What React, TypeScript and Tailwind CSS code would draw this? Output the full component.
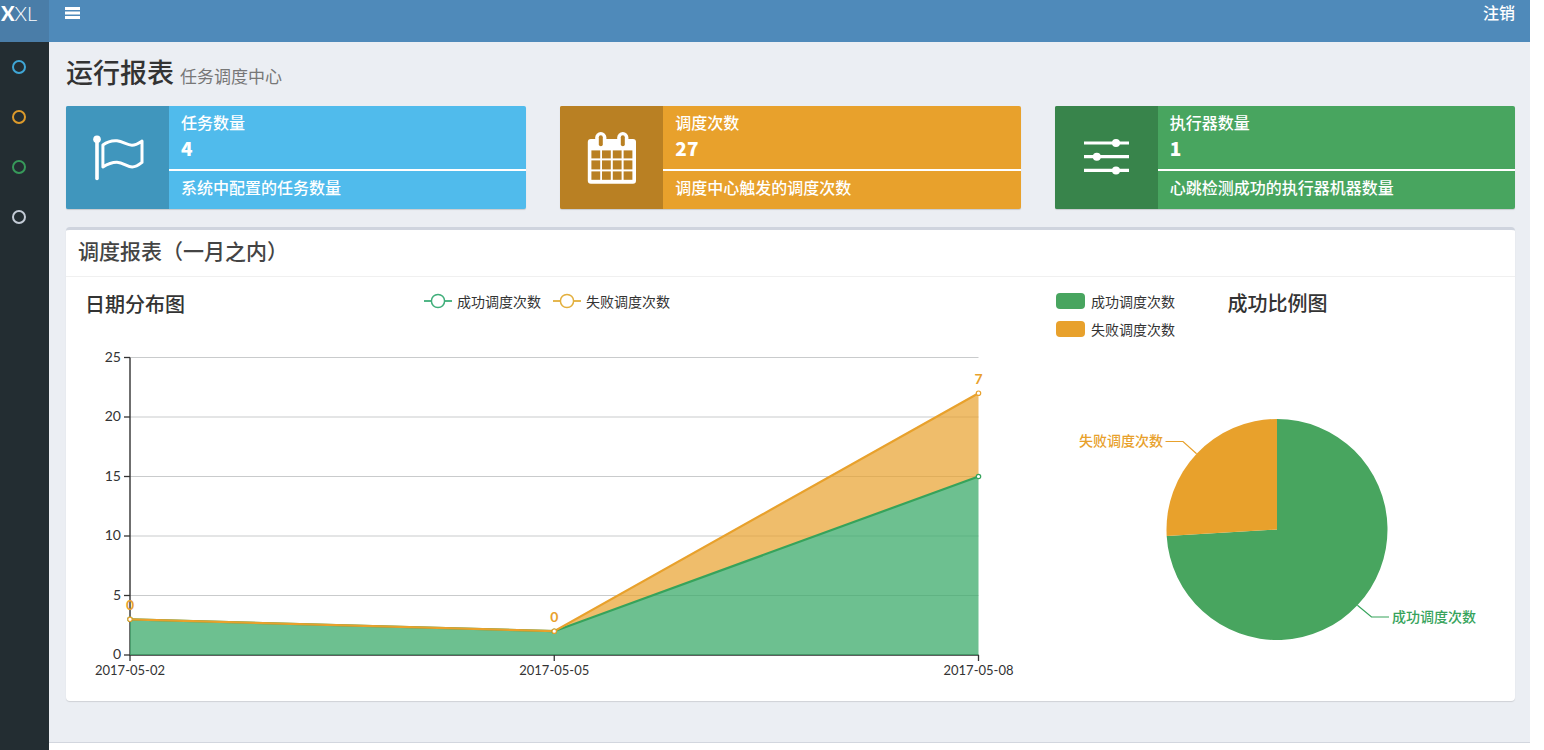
import type { ReactNode } from "react";

const SUCCESS = "#48a55f";
const FAIL = "#e8a12c";
const AXIS = "#333333";

const days = [
  { date: "2017-05-02", success: 3, fail: 0 },
  { date: "2017-05-05", success: 2, fail: 0 },
  { date: "2017-05-08", success: 15, fail: 7 },
];

const navItems = [
  { label: "运行报表", ring: "border-[#3fa6d6]" },
  { label: "任务管理", ring: "border-[#dc9a2b]" },
  { label: "调度日志", ring: "border-[#37995a]" },
  { label: "执行器管理", ring: "border-[#c3cbd6]" },
];

function FlagIcon() {
  return (
    <svg viewBox="0 0 103 103" className="h-full w-full" aria-hidden="true">
      <circle cx="31" cy="33.2" r="3.8" fill="#fff" />
      <path d="M31 34V72.5" stroke="#fff" strokeWidth="3.6" strokeLinecap="round" />
      <path
        d="M36.9 39C42 35.2 46.500 34.4 51 34.8C57 35.4 61 39.2 66 39.2C70 39.2 73 37 76 35V56.4C73 58.8 70 61 66.2 61C61.5 61 57 56.4 51 56.2C46 56.100 41.500 58 36.900 61Z"
        fill="none"
        stroke="#fff"
        strokeWidth="3"
        strokeLinejoin="round"
      />
    </svg>
  );
}

function CalendarIcon() {
  const columns = [31.4, 42, 52.8, 63.6];
  const rows = [
    { y: 44.4, height: 8 },
    { y: 54.4, height: 9 },
    { y: 65.4, height: 8.4 },
  ];
  return (
    <svg viewBox="0 0 103 103" className="h-full w-full" aria-hidden="true">
      <rect x="27.8" y="33" width="48.2" height="44.8" rx="3" fill="#fff" />
      {[40.8, 62.8].map((x) => (
        <g key={x}>
          <rect x={x - 5.6} y="26" width="11.2" height="20" rx="5.6" fill="#fff" />
          <rect x={x - 2} y="29.2" width="4" height="11" rx="2" fill="#b98023" />
        </g>
      ))}
      {rows.map(({ y, height }) =>
        columns.map((x) => <rect key={`${x}-${y}`} x={x} y={y} width="8.8" height={height} fill="#b98023" />),
      )}
    </svg>
  );
}

function SlidersIcon() {
  const sliders = [
    { y: 37, knob: 61 },
    { y: 50.7, knob: 41.8 },
    { y: 64.4, knob: 61 },
  ];
  return (
    <svg viewBox="0 0 103 103" className="h-full w-full" aria-hidden="true">
      {sliders.map(({ y, knob }) => (
        <g key={y}>
          <path d={`M29 ${y}H74`} stroke="#fff" strokeWidth="3.2" />
          <circle cx={knob} cy={y} r="4" fill="#fff" />
        </g>
      ))}
    </svg>
  );
}

type InfoBoxProps = {
  icon: ReactNode;
  label: string;
  value: number;
  note: string;
  body: string;
  side: string;
};

function InfoBox({ icon, label, value, note, body, side }: InfoBoxProps) {
  return (
    <section className={`flex overflow-hidden rounded-xs text-white shadow-[0_1px_1px_rgba(0,0,0,0.15)] ${body}`}>
      <div className={`size-[103px] shrink-0 ${side}`}>{icon}</div>
      <div className="min-w-0 flex-1">
        <div className="border-b-2 border-white px-3 pt-1 pb-[7px]">
          <h2 className="text-base leading-6 font-medium">{label}</h2>
          <p className="text-[19px] leading-7 font-black">{value}</p>
        </div>
        <p className="px-3 pt-1 text-base leading-6 font-medium">{note}</p>
      </div>
    </section>
  );
}

function LineLegend({ label, color }: { label: string; color: string }) {
  return (
    <li className="flex items-center gap-[5px]">
      <svg viewBox="0 0 28 16" className="h-4 w-7" aria-hidden="true">
        <path d="M0 8H28" stroke={color} strokeWidth="1.8" />
        <circle cx="14" cy="8" r="6.6" fill="#fff" stroke={color} strokeWidth="1.5" />
      </svg>
      {label}
    </li>
  );
}

function DateChart() {
  const left = 64;
  const right = 912.5;
  const bottom = 310;
  const y = (v: number) => bottom - v * 11.9;
  const x = (i: number) => left + (i * (right - left)) / (days.length - 1);
  const lower = days.map((d, i) => `${x(i)},${y(d.success)}`);
  const upper = days.map((d, i) => `${x(i)},${y(d.success + d.fail)}`);
  const ticks = [0, 5, 10, 15, 20, 25];
  return (
    <svg
      viewBox="0 0 966 355"
      className="block w-full font-['Lato','Noto_Sans_CJK_SC',sans-serif] text-[14px]"
      role="img"
      aria-label="日期分布图"
    >
      {ticks.map((t) => (
        <g key={t}>
          <path d={`M${left} ${y(t)}H${right}`} stroke="#c9cbcc" />
          <path d={`M${left - 6} ${y(t)}H${left}`} stroke={AXIS} strokeWidth="1.3" />
          <text x={left - 9} y={y(t) + 4} textAnchor="end" fill={AXIS}>
            {t}
          </text>
        </g>
      ))}
      <path d={`M${left} ${y(25)}V${bottom}H${right}`} fill="none" stroke={AXIS} strokeWidth="1.4" />
      <polygon points={[`${left},${bottom}`, ...lower, `${right},${bottom}`].join(" ")} fill="#3cab6b" fillOpacity="0.75" />
      <polygon points={[...upper, ...[...lower].reverse()].join(" ")} fill={FAIL} fillOpacity="0.7" />
      <polyline points={lower.join(" ")} fill="none" stroke="#36a35b" strokeWidth="2.2" />
      <polyline points={upper.join(" ")} fill="none" stroke={FAIL} strokeWidth="2.2" />
      {days.map((d, i) => (
        <g key={d.date}>
          <path d={`M${x(i)} ${bottom}v6`} stroke={AXIS} strokeWidth="1.3" />
          <text x={x(i)} y={bottom + 20} textAnchor="middle" fill={AXIS} className="text-[13px]">
            {d.date}
          </text>
          <circle cx={x(i)} cy={y(d.success)} r="2.2" fill="#fff" stroke="#36a35b" strokeWidth="1.2" />
          <circle cx={x(i)} cy={y(d.success + d.fail)} r="2.2" fill="#fff" stroke={FAIL} strokeWidth="1.2" />
          <text x={x(i)} y={y(d.success + d.fail) - 9} textAnchor="middle" fill={FAIL} className="font-bold">
            {d.fail}
          </text>
        </g>
      ))}
    </svg>
  );
}

function RatioChart() {
  const cx = 245;
  const cy = 184.5;
  const r = 110.5;
  const success = days.reduce((n, d) => n + d.success, 0);
  const fail = days.reduce((n, d) => n + d.fail, 0);
  const angle = (2 * Math.PI * success) / (success + fail);
  const ex = cx + r * Math.sin(angle);
  const ey = cy - r * Math.cos(angle);
  return (
    <svg viewBox="0 0 483 355" className="block w-full text-[14px] font-medium" role="img" aria-label="成功比例图">
      <path d={`M${cx} ${cy}V${cy - r}A${r} ${r} 0 1 1 ${ex} ${ey}Z`} fill={SUCCESS} />
      <path d={`M${cx} ${cy}L${ex} ${ey}A${r} ${r} 0 0 1 ${cx} ${cy - r}Z`} fill={FAIL} />
      <path d="M164.6 108.7L151 96.5H133.5" fill="none" stroke={FAIL} strokeWidth="1.2" />
      <text x="131" y="101" textAnchor="end" fill={FAIL}>
        失败调度次数
      </text>
      <path d="M325.4 260.3L339.5 272H357" fill="none" stroke="#36a35b" strokeWidth="1.2" />
      <text x="360" y="277" fill="#36a35b">
        成功调度次数
      </text>
    </svg>
  );
}

export default function App() {
  return (
    <div className="flex min-h-screen flex-col bg-white pr-3.5 font-['Noto_Sans_CJK_SC',sans-serif] text-[#333]">
      <header className="flex h-[42px] bg-[#4f8aba] text-white">
        <a
          href="#home"
          className="w-[49px] shrink-0 bg-[#4a7da8] pl-px font-['Lato',sans-serif] text-xl leading-[26px] font-light"
        >
          <b className="font-black">X</b>XL
        </a>
        <nav className="flex h-[26px] flex-1 items-center justify-between pr-[15px] pl-4">
          <button type="button" aria-label="切换导航">
            <svg viewBox="0 0 15 12" className="h-3 w-[15px]" aria-hidden="true">
              <path d="M0 1.5H15M0 6H15M0 10.5H15" stroke="#fff" strokeWidth="2.8" />
            </svg>
          </button>
          <a href="#logout" className="pb-0.5 text-base leading-6 font-medium">
            注销
          </a>
        </nav>
      </header>

      <div className="flex flex-1">
        <aside className="w-[49px] shrink-0 bg-[#232d32] pt-[18px] pl-3">
          <nav className="flex flex-col gap-9">
            {navItems.map((item) => (
              <a
                key={item.label}
                href="#nav"
                aria-label={item.label}
                className={`size-3.5 rounded-full border-2 ${item.ring}`}
              />
            ))}
          </nav>
        </aside>

        <div className="flex min-w-0 flex-1 flex-col">
          <main className="bg-[#ebeef3] pr-[15px] pb-[41px] pl-[17px]">
            <h1 className="flex h-16 items-baseline gap-1.5 pt-2.5 text-[27px] leading-10 font-medium text-[#333]">
              运行报表
              <small className="text-[17px] font-normal text-[#777]">任务调度中心</small>
            </h1>

            <div className="grid grid-cols-3 gap-[34px]">
              <InfoBox
                icon={<FlagIcon />}
                label="任务数量"
                value={4}
                note="系统中配置的任务数量"
                body="bg-[#50bbec]"
                side="bg-[#4096bd]"
              />
              <InfoBox
                icon={<CalendarIcon />}
                label="调度次数"
                value={27}
                note="调度中心触发的调度次数"
                body="bg-[#e8a12c]"
                side="bg-[#b98023]"
              />
              <InfoBox
                icon={<SlidersIcon />}
                label="执行器数量"
                value={1}
                note="心跳检测成功的执行器机器数量"
                body="bg-[#48a55f]"
                side="bg-[#38844b]"
              />
            </div>

            <section className="mt-[18px] rounded-sm border-t-3 border-[#cfd4de] bg-white pb-px shadow-[0_1px_1px_rgba(0,0,0,0.12)]">
              <h2 className="border-b border-[#f0f0f0] px-3 pt-1 pb-2.5 text-[21px] leading-8 font-medium text-[#444]">
                调度报表（一月之内）
              </h2>
              <div className="grid grid-cols-[2fr_1fr]">
                <div>
                  <div className="grid h-[68px] grid-cols-[1fr_auto_1fr] items-start pt-3 pr-1">
                    <h3 className="pl-[19px] text-xl leading-[30px] font-medium">日期分布图</h3>
                    <ul className="flex gap-3 text-sm leading-6">
                      <LineLegend label="成功调度次数" color="#3fae7a" />
                      <LineLegend label="失败调度次数" color="#e3af3d" />
                    </ul>
                  </div>
                  <DateChart />
                </div>
                <div>
                  <div className="grid h-[68px] grid-cols-[1fr_auto_1fr] items-start pt-2.5 pr-4 pl-6">
                    <ul className="flex flex-col text-sm leading-7">
                      <li className="flex items-center gap-1.5">
                        <span className="h-4 w-[29px] rounded-sm bg-[#48a55f]" />
                        成功调度次数
                      </li>
                      <li className="flex items-center gap-1.5">
                        <span className="h-4 w-[29px] rounded-sm bg-[#e8a12c]" />
                        失败调度次数
                      </li>
                    </ul>
                    <h3 className="text-xl leading-8 font-medium">成功比例图</h3>
                  </div>
                  <RatioChart />
                </div>
              </div>
            </section>
          </main>
          <footer className="min-h-2 flex-1 border-t border-[#d2d6de] bg-white" />
        </div>
      </div>
    </div>
  );
}
